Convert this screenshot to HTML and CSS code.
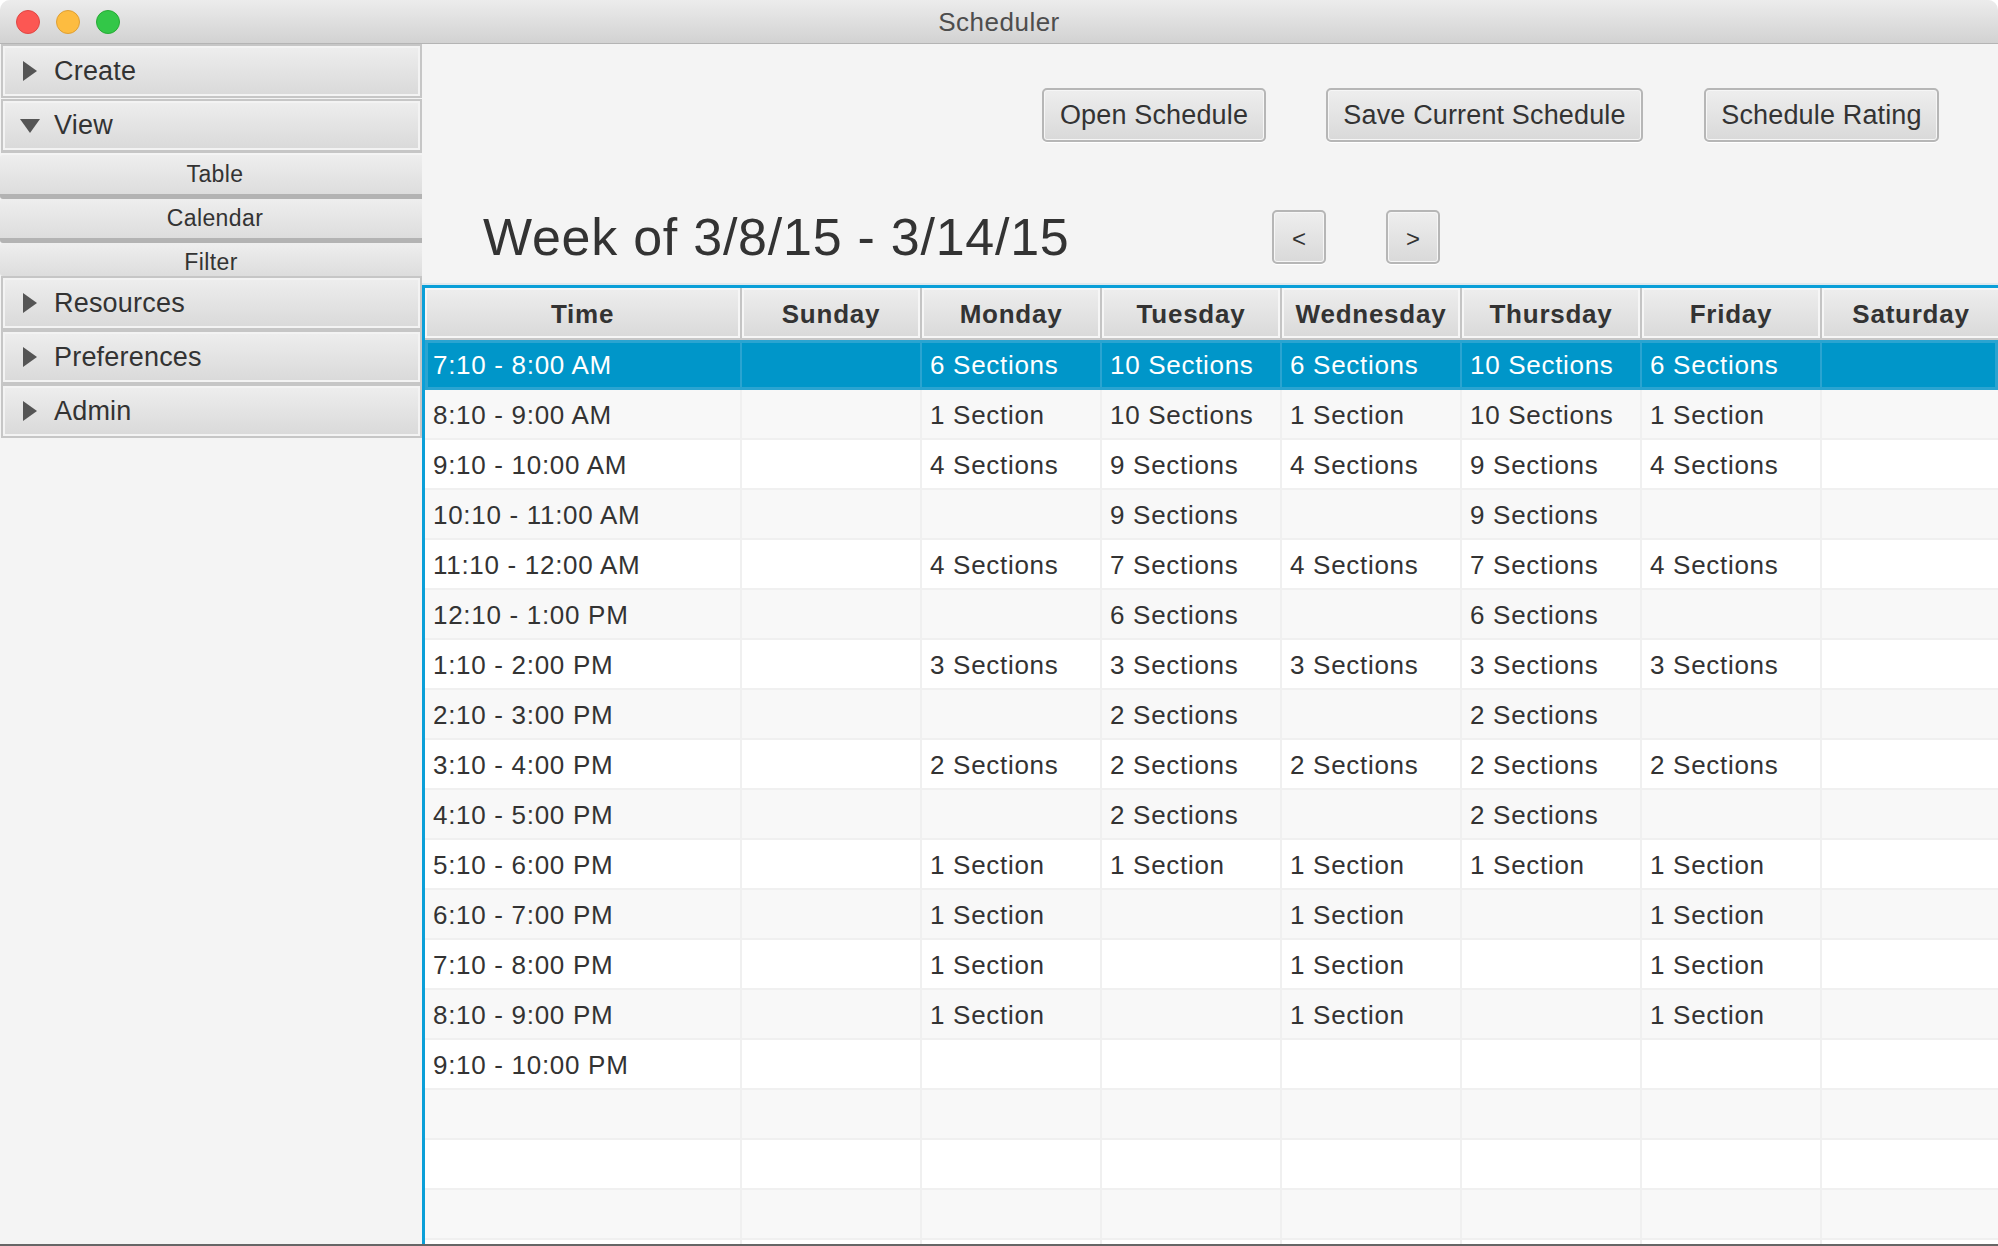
FILE: index.html
```html
<!DOCTYPE html>
<html lang="en">
<head>
<meta charset="utf-8">
<title>Scheduler</title>
<link rel="stylesheet" href="styles.css">
</head>
<body>
<div class="window">
  <header class="titlebar">
    <div class="lights"><span class="light red"></span><span class="light yellow"></span><span class="light green"></span></div>
    <div class="title">Scheduler</div>
  </header>
  <div class="content">
    <aside class="sidebar">
      <div class="pane"><svg class="tri" viewBox="0 0 14 20"><path d="M0 0L14 10L0 20Z"/></svg><span>Create</span></div>
      <div class="pane pane-view"><svg class="tri tri-down" viewBox="0 0 20 14"><path d="M0 0H20L10 14Z"/></svg><span>View</span></div>
      <div class="subitem">Table</div>
      <div class="subitem">Calendar</div>
      <div class="subitem subitem-clipped"><span>Filter</span></div>
      <div class="pane"><svg class="tri" viewBox="0 0 14 20"><path d="M0 0L14 10L0 20Z"/></svg><span>Resources</span></div>
      <div class="pane"><svg class="tri" viewBox="0 0 14 20"><path d="M0 0L14 10L0 20Z"/></svg><span>Preferences</span></div>
      <div class="pane"><svg class="tri" viewBox="0 0 14 20"><path d="M0 0L14 10L0 20Z"/></svg><span>Admin</span></div>
    </aside>
    <main class="main">
      <div class="actions">
        <button class="btn btn-open">Open Schedule</button>
        <button class="btn btn-save">Save Current Schedule</button>
        <button class="btn btn-rate">Schedule Rating</button>
      </div>
      <div class="weekbar">
        <h1 class="week">Week of 3/8/15 - 3/14/15</h1>
        <button class="btn nav">&lt;</button>
        <button class="btn nav">&gt;</button>
      </div>
      <div class="table">
        <div class="row head"><div>Time</div><div>Sunday</div><div>Monday</div><div>Tuesday</div><div>Wednesday</div><div>Thursday</div><div>Friday</div><div>Saturday</div></div>
        <div class="row selected"><div>7:10 - 8:00 AM</div><div></div><div>6 Sections</div><div>10 Sections</div><div>6 Sections</div><div>10 Sections</div><div>6 Sections</div><div></div></div>
        <div class="row"><div>8:10 - 9:00 AM</div><div></div><div>1 Section</div><div>10 Sections</div><div>1 Section</div><div>10 Sections</div><div>1 Section</div><div></div></div>
        <div class="row"><div>9:10 - 10:00 AM</div><div></div><div>4 Sections</div><div>9 Sections</div><div>4 Sections</div><div>9 Sections</div><div>4 Sections</div><div></div></div>
        <div class="row"><div>10:10 - 11:00 AM</div><div></div><div></div><div>9 Sections</div><div></div><div>9 Sections</div><div></div><div></div></div>
        <div class="row"><div>11:10 - 12:00 AM</div><div></div><div>4 Sections</div><div>7 Sections</div><div>4 Sections</div><div>7 Sections</div><div>4 Sections</div><div></div></div>
        <div class="row"><div>12:10 - 1:00 PM</div><div></div><div></div><div>6 Sections</div><div></div><div>6 Sections</div><div></div><div></div></div>
        <div class="row"><div>1:10 - 2:00 PM</div><div></div><div>3 Sections</div><div>3 Sections</div><div>3 Sections</div><div>3 Sections</div><div>3 Sections</div><div></div></div>
        <div class="row"><div>2:10 - 3:00 PM</div><div></div><div></div><div>2 Sections</div><div></div><div>2 Sections</div><div></div><div></div></div>
        <div class="row"><div>3:10 - 4:00 PM</div><div></div><div>2 Sections</div><div>2 Sections</div><div>2 Sections</div><div>2 Sections</div><div>2 Sections</div><div></div></div>
        <div class="row"><div>4:10 - 5:00 PM</div><div></div><div></div><div>2 Sections</div><div></div><div>2 Sections</div><div></div><div></div></div>
        <div class="row"><div>5:10 - 6:00 PM</div><div></div><div>1 Section</div><div>1 Section</div><div>1 Section</div><div>1 Section</div><div>1 Section</div><div></div></div>
        <div class="row"><div>6:10 - 7:00 PM</div><div></div><div>1 Section</div><div></div><div>1 Section</div><div></div><div>1 Section</div><div></div></div>
        <div class="row"><div>7:10 - 8:00 PM</div><div></div><div>1 Section</div><div></div><div>1 Section</div><div></div><div>1 Section</div><div></div></div>
        <div class="row"><div>8:10 - 9:00 PM</div><div></div><div>1 Section</div><div></div><div>1 Section</div><div></div><div>1 Section</div><div></div></div>
        <div class="row"><div>9:10 - 10:00 PM</div><div></div><div></div><div></div><div></div><div></div><div></div><div></div></div>
        <div class="row"><div></div><div></div><div></div><div></div><div></div><div></div><div></div><div></div></div>
        <div class="row"><div></div><div></div><div></div><div></div><div></div><div></div><div></div><div></div></div>
        <div class="row"><div></div><div></div><div></div><div></div><div></div><div></div><div></div><div></div></div>
        <div class="row"><div></div><div></div><div></div><div></div><div></div><div></div><div></div><div></div></div>
      </div>
    </main>
  </div>
</div>
</body>
</html>
```

FILE: styles.css
```css
* { box-sizing: border-box; }
html, body { margin: 0; height: 100%; background: #fff; overflow: hidden; }
body { font-family: "Liberation Sans", Arial, sans-serif; color: #333; }

.window {
  width: 1998px;
  height: 1246px;
  display: flex;
  flex-direction: column;
  background: #f4f4f4;
  border-radius: 10px 10px 0 0;
  border-bottom: 2px solid #666;
  overflow: hidden;
}

.titlebar {
  height: 44px;
  flex: none;
  display: flex;
  align-items: center;
  justify-content: center;
  position: relative;
  background: linear-gradient(#ececec, #d2d2d2);
  border-bottom: 1px solid #b4b4b4;
}
.lights { position: absolute; left: 16px; top: 10px; display: flex; gap: 16px; }
.light { width: 24px; height: 24px; border-radius: 50%; border: 1px solid; }
.red { background: #fc5753; border-color: #df4744; }
.yellow { background: #fdbc40; border-color: #de9f34; }
.green { background: #33c748; border-color: #27aa35; }
.title { font-size: 26px; letter-spacing: 0.5px; color: #4d4d4d; padding-top: 1px; }

.content { flex: 1; display: flex; min-height: 0; }

.sidebar { width: 422px; flex: none; overflow: hidden; }
.pane {
  height: 54px;
  margin: 0 0 0 1px;
  display: flex;
  align-items: center;
  padding-left: 20px;
  font-size: 27px;
  letter-spacing: 0.2px;
  background: linear-gradient(#eeeeee, #d9d9d9);
  border: 2px solid #c6c6c6;
  box-shadow: inset 0 0 0 2px #f3f3f3;
}
.pane span { margin-left: 17px; }
.pane-view { margin-top: 1px; margin-bottom: 2px; border-bottom-width: 3px; }
.tri { width: 14px; height: 20px; fill: #555; flex: none; }
.tri-down { width: 20px; height: 14px; margin-left: -3px; margin-right: -3px; }

.subitem {
  height: 44px;
  display: flex;
  align-items: center;
  justify-content: center;
  padding-left: 8px;
  font-size: 23px;
  letter-spacing: 0.4px;
  background: linear-gradient(#eeeeee, #dddddd);
  border-bottom: 5px solid #b3b3b3;
  border-radius: 3px 0 0 3px;
}
.subitem-clipped {
  height: 33px;
  align-items: flex-start;
  border-bottom: 0;
  padding: 6px 0 0 0;
  overflow: hidden;
}

.main { flex: 1; min-width: 0; display: flex; flex-direction: column; }

.actions {
  display: flex;
  justify-content: flex-end;
  gap: 60px;
  padding: 44px 59px 0 0;
}
.btn {
  height: 54px;
  font-family: inherit;
  font-size: 27px;
  letter-spacing: 0.15px;
  color: #333;
  background: linear-gradient(#eeeeee, #d9d9d9);
  border: 2px solid #b6b6b6;
  border-radius: 5px;
  box-shadow: inset 0 0 0 1px #f6f6f6, 0 1px 0 #fff;
  padding: 0;
}
.btn-open { width: 224px; }
.btn-save { width: 317px; }
.btn-rate { width: 235px; margin-left: 1px; }

.weekbar {
  display: flex;
  align-items: center;
  height: 54px;
  margin-top: 68px;
  padding-left: 61px;
  gap: 60px;
}
.week {
  margin: 0 -60px 0 0;
  width: 789px;
  font-size: 52px;
  font-weight: 400;
  letter-spacing: 0.75px;
  color: #333;
}
.nav { width: 54px; font-size: 24px; padding-top: 3px; }

.table {
  flex: 1;
  margin-top: 21px;
  min-height: 0;
  overflow: hidden;
  border-top: 3px solid #0a9fd8;
  border-left: 3px solid #0a9fd8;
  box-shadow: 0 -2px 0 #dfe9ee;
}
.row {
  display: grid;
  grid-template-columns: 317px repeat(7, 180px);
  height: 50px;
  background: #fff;
  border-bottom: 2px solid #f0f0f0;
  font-size: 26px;
  letter-spacing: 0.7px;
  line-height: 50px;
}
.row:nth-child(odd) { background: #f8f8f8; }
.row > div { border-right: 2px solid #f0f0f0; padding-left: 8px; white-space: nowrap; overflow: hidden; }

.row.head {
  height: 52px;
  background: #c8c8c8;
  border-bottom: 0;
  font-weight: 700;
  letter-spacing: 0.75px;
  line-height: 52px;
  padding-bottom: 2px;
}
.row.head > div {
  padding: 0;
  text-align: center;
  background: linear-gradient(#eeeeee, #d9d9d9);
  border-right: 2px solid #c4c4c4;
  box-shadow: inset 0 0 0 2px #f6f6f6;
}

.row.selected {
  background: #0096c9;
  color: #fff;
  border-bottom: 0;
  box-shadow: inset 0 0 0 3px #2aa4d1;
}
.row.selected > div { border-right-color: #2aa4d1; }
```
